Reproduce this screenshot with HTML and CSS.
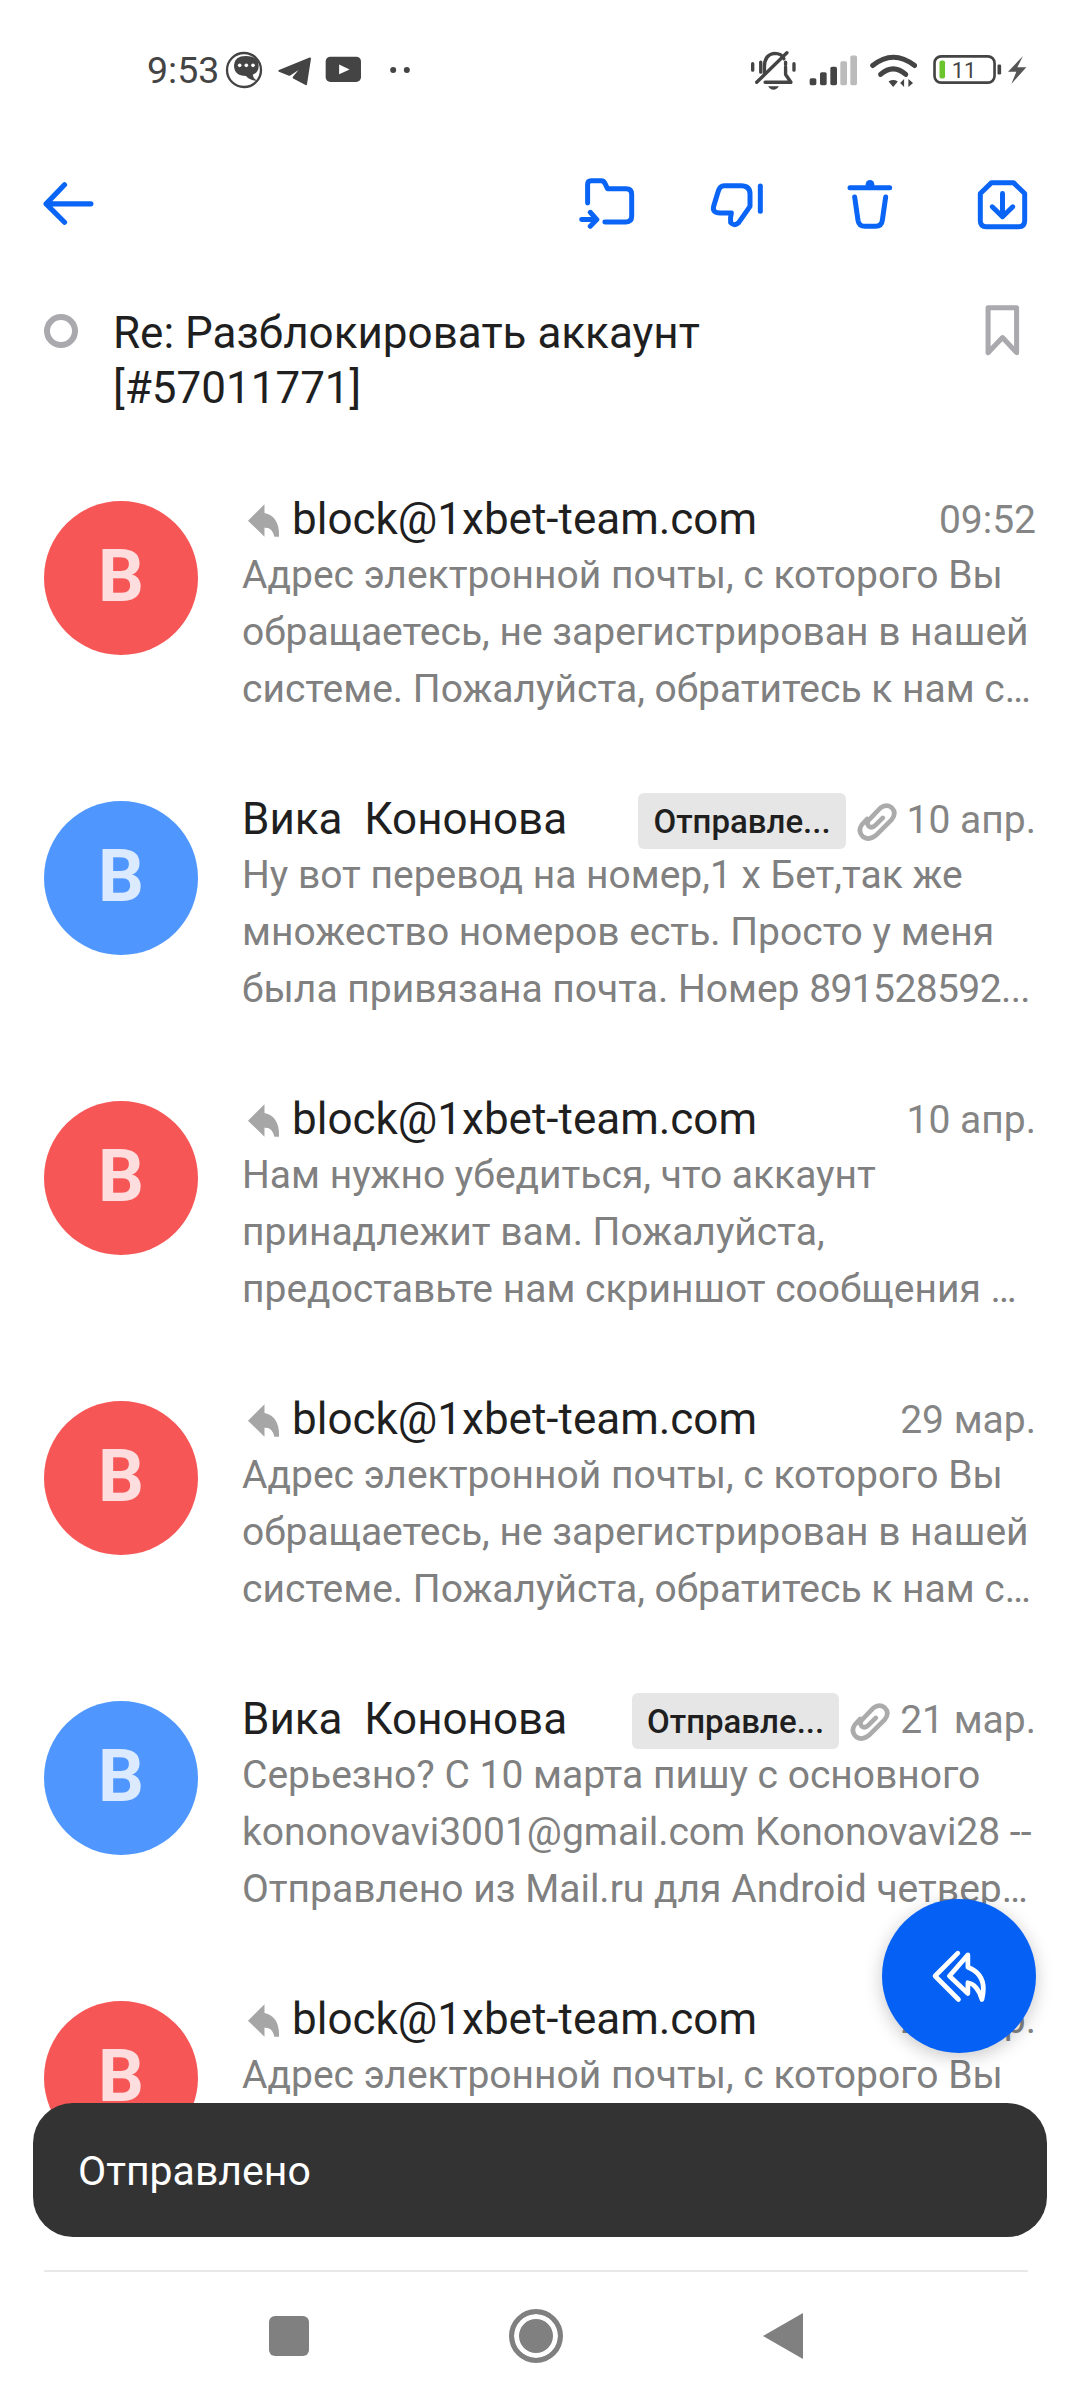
FILE: index.html
```html
<!DOCTYPE html>
<html lang="ru">
<head>
    <meta charset="UTF-8">
    <meta name="viewport" content="width=device-width, initial-scale=1.0">
    <title>Re: Разблокировать аккаунт</title>
    <link rel="stylesheet" href="styles.css">
</head>
<body>
    <div id="screen">
        <!-- status bar -->
        <div class="status">
            <span class="clock">9:53</span>
            <svg class="st-msg" viewBox="375 63 114 114">
                <circle cx="432" cy="120" r="51" fill="none" stroke="#444" stroke-width="7"/>
                <path d="M402 105 Q404 78 437 78 Q476 78 476 108 Q476 127 458 134 Q460 146 472 152 Q450 152 438 138 Q402 138 402 105Z" fill="#444"/>
                <circle cx="419" cy="106" r="5.5" fill="#fff"/>
                <circle cx="439" cy="106" r="5.5" fill="#fff"/>
                <circle cx="459" cy="106" r="5.5" fill="#fff"/>
            </svg>
            <svg class="st-tg" viewBox="530 78 105 92">
                <path d="M537 122 L629 85 L617 162 L580 142 L610 106 L567 134Z" fill="#444" stroke="#444" stroke-width="6" stroke-linejoin="round"/>
            </svg>
            <svg class="st-yt" viewBox="678 80 110 80">
                <rect x="680" y="82" width="105" height="75" rx="14" fill="#444"/>
                <path d="M720 105 L751 120 L720 134Z" fill="#fff"/>
            </svg>
            <svg class="st-dots" viewBox="870 108 65 24">
                <circle cx="882" cy="120" r="9" fill="#444"/>
                <circle cx="923" cy="120" r="9" fill="#444"/>
            </svg>
            <div class="status-right">
                <svg class="st-bell" viewBox="92 62 140 122">
                    <g fill="none" stroke="#444" stroke-width="10" stroke-linecap="round" stroke-linejoin="round">
                        <path d="M135 132 V112 Q135 75 165 72 Q186 72 193 88"/>
                        <path d="M198 112 V135 L214 158 H137"/>
                        <path d="M112 158 L202 70"/>
                        <path d="M100 103 V122 M124 98 V128 M198 98 V105 M223 103 V122"/>
                    </g>
                    <path d="M146 170 H178 Q172 180 162 180 Q152 180 146 170Z" fill="#444"/>
                </svg>
                <svg class="st-signal" viewBox="270 76 144 92">
                    <rect x="272" y="145" width="20" height="21" rx="5" fill="#444"/>
                    <rect x="303" y="127" width="20" height="39" rx="5" fill="#444"/>
                    <rect x="334" y="111" width="20" height="55" rx="5" fill="#444"/>
                    <rect x="364" y="94" width="20" height="72" rx="5" fill="#bbb"/>
                    <rect x="394" y="77" width="20" height="89" rx="5" fill="#bbb"/>
                </svg>
                <svg class="st-wifi" viewBox="450 68 142 104">
                    <g fill="none" stroke="#444" stroke-width="15" stroke-linecap="round">
                        <path d="M458 105 Q520 55 585 105"/>
                        <path d="M482 132 Q520 98 558 132"/>
                    </g>
                    <path d="M506 153 Q520 145 534 153 L520 170Z" fill="#444"/>
                    <path d="M553 146 V170 L541 158Z M566 146 V170 L580 158Z" fill="#444"/>
                </svg>
                <svg class="st-batt" viewBox="634 72 212 94">
                    <rect x="640" y="79" width="182" height="80" rx="20" fill="none" stroke="#444" stroke-width="8"/>
                    <rect x="655" y="92" width="17" height="54" rx="6" fill="#6cc52d"/>
                    <rect x="831" y="104" width="11" height="30" rx="4" fill="#444"/>
                    <text x="692" y="145" font-size="66" fill="#444">11</text>
                </svg>
                <svg class="st-bolt" viewBox="862 75 60 90">
                    <path d="M910 78 L865 125 H890 L875 162 L920 112 H893Z" fill="#555"/>
                </svg>
            </div>
        </div>

        <!-- toolbar -->
        <div class="toolbar">
            <svg class="tb-back" viewBox="68 100 147 122">
                <path d="M130 107 L77 162 L130 215 M77 162 H206"/>
            </svg>
            <div class="tb-right">
                <svg class="tb-folder" viewBox="55 50 172 156">
                    <path d="M84 128 V72 Q84 61 95 61 H125 Q133 61 137 70 L144 85 H200 Q217 85 217 102 V168 Q217 185 200 185 H136"/>
                    <path d="M66 178 H108 M92 156 L112 178 L92 198"/>
                </svg>
                <svg class="tb-thumb" viewBox="452 62 162 138">
                    <path d="M495 73 H545 Q572 73 572 98 V135 L538 184 Q525 196 514 184 Q512 172 516 155 H482 Q458 155 463 135 L476 92 Q481 73 495 73Z"/>
                    <path d="M603 74 V150"/>
                </svg>
                <svg class="tb-trash" viewBox="864 56 138 150">
                    <path d="M873 82 H992"/>
                    <path d="M887 110 L897 180 Q900 198 918 198 H950 Q968 198 970 180 L980 110"/>
                    <circle cx="933" cy="72" r="13" class="tb-fill"/>
                </svg>
                <svg class="tb-save" viewBox="1252 55 154 152">
                    <path d="M1262 98 L1296 65 H1362 L1396 98 V180 Q1396 198 1378 198 H1280 Q1262 198 1262 180Z"/>
                    <path d="M1329 98 V165 M1298 138 L1329 168 L1360 138"/>
                </svg>
            </div>
        </div>

        <!-- subject -->
        <div class="subject">
            <span class="ring"></span>
            <div class="subject-text">Re: Разблокировать аккаунт [#57011771]</div>
            <svg class="bookmark" viewBox="1275 430 110 155">
                <path d="M1287 441 H1372 V575 L1330 530 L1287 575Z"/>
            </svg>
        </div>

        <!-- thread -->
        <div class="thread">
            <div class="mail">
                <div class="avatar red">В</div>
                <div class="mail-body">
                    <div class="mail-head">
                        <svg class="reply" viewBox="676 68 106 106"><path d="M682 122 L732 72 V98 Q778 108 776 170 H762 Q755 140 732 143 V170Z"/></svg>
                        <span class="sender">block@1xbet-team.com</span>
                        <span class="date">09:52</span>
                    </div>
                    <div class="preview">Адрес электронной почты, с которого Вы обращаетесь, не зарегистрирован в нашей системе. Пожалуйста, обратитесь к нам с того адреса, который привязан к вашему аккаунту</div>
                </div>
            </div>
            <div class="mail">
                <div class="avatar blue">В</div>
                <div class="mail-body">
                    <div class="mail-head">
                        <span class="sender">Вика  Кононова</span>
                        <span class="badge">Отправле...</span>
                        <svg class="clip" viewBox="45 40 125 115"><path d="M125 85 L103 107 Q92 118 82 110 Q74 100 84 90 L118 55 Q135 42 152 54 Q168 70 152 90 L105 137 Q85 155 65 142 Q48 125 62 105 L78 88"/></svg>
                        <span class="date">10 апр.</span>
                    </div>
                    <div class="preview">Ну вот перевод на номер,1 х Бет,так же множество номеров есть. Просто у меня была привязана почта. Номер <span class="tight">891528592...</span></div>
                </div>
            </div>
            <div class="mail">
                <div class="avatar red">В</div>
                <div class="mail-body">
                    <div class="mail-head">
                        <svg class="reply" viewBox="676 68 106 106"><path d="M682 122 L732 72 V98 Q778 108 776 170 H762 Q755 140 732 143 V170Z"/></svg>
                        <span class="sender">block@1xbet-team.com</span>
                        <span class="date">10 апр.</span>
                    </div>
                    <div class="preview">Нам нужно убедиться, что аккаунт принадлежит вам. Пожалуйста, предоставьте нам скриншот сообщения от службы поддержки и номер вашего счета</div>
                </div>
            </div>
            <div class="mail">
                <div class="avatar red">В</div>
                <div class="mail-body">
                    <div class="mail-head">
                        <svg class="reply" viewBox="676 68 106 106"><path d="M682 122 L732 72 V98 Q778 108 776 170 H762 Q755 140 732 143 V170Z"/></svg>
                        <span class="sender">block@1xbet-team.com</span>
                        <span class="date">29 мар.</span>
                    </div>
                    <div class="preview">Адрес электронной почты, с которого Вы обращаетесь, не зарегистрирован в нашей системе. Пожалуйста, обратитесь к нам с того адреса, который привязан к вашему аккаунту</div>
                </div>
            </div>
            <div class="mail">
                <div class="avatar blue">В</div>
                <div class="mail-body">
                    <div class="mail-head">
                        <span class="sender">Вика  Кононова</span>
                        <span class="badge">Отправле...</span>
                        <svg class="clip" viewBox="45 40 125 115"><path d="M125 85 L103 107 Q92 118 82 110 Q74 100 84 90 L118 55 Q135 42 152 54 Q168 70 152 90 L105 137 Q85 155 65 142 Q48 125 62 105 L78 88"/></svg>
                        <span class="date">21 мар.</span>
                    </div>
                    <div class="preview">Серьезно? С 10 марта пишу с основного kononovavi3001@gmail.com Kononovavi28 -- Отправлено из Mail.ru для Android четверг, 10 марта 2022 г. в 12:00</div>
                </div>
            </div>
            <div class="mail">
                <div class="avatar red">В</div>
                <div class="mail-body">
                    <div class="mail-head">
                        <svg class="reply" viewBox="676 68 106 106"><path d="M682 122 L732 72 V98 Q778 108 776 170 H762 Q755 140 732 143 V170Z"/></svg>
                        <span class="sender">block@1xbet-team.com</span>
                        <span class="date">21 мар.</span>
                    </div>
                    <div class="preview">Адрес электронной почты, с которого Вы обращаетесь, не зарегистрирован в нашей системе. Пожалуйста, обратитесь к нам с того адреса, который привязан к вашему аккаунту</div>
                </div>
            </div>
        </div>

        <!-- bottom nav -->
        <div class="navbar">
            <div class="nav-cell"><span class="nav-square"></span></div>
            <div class="nav-cell"><span class="nav-circle"></span></div>
            <div class="nav-cell"><span class="nav-tri"></span></div>
        </div>

        <!-- floating stuff -->
        <div class="fab">
            <svg viewBox="330 268 170 160">
                <path d="M410 280 L342 348 L412 418"/>
                <path d="M440 285 L385 348 L440 400 V368 Q468 372 482 418 Q500 345 440 322Z"/>
            </svg>
        </div>
        <div class="snackbar">Отправлено</div>
    </div>
</body>
</html>
```

FILE: styles.css
```css
* {
    box-sizing: border-box;
}

body {
    margin: 0;
    background: #fff;
    font-family: Roboto, "Noto Sans", sans-serif;
}

#screen {
    position: relative;
    width: 1080px;
    height: 2400px;
    overflow: hidden;
    display: flex;
    flex-direction: column;
}

/* status bar */
.status {
    height: 100px;
    padding: 40px 53px 0 147px;
    display: flex;
    align-items: flex-start;
    flex: none;
}

.status svg {
    display: block;
    flex: none;
}

.status text {
    font-family: Roboto, sans-serif;
}

.clock {
    font-size: 37.5px;
    line-height: 60px;
    color: #444;
}

.st-msg { width: 38px; height: 38px; margin: 11px 0 0 6px; }
.st-tg { width: 35px; height: 31px; margin: 16px 0 0 14px; }
.st-yt { width: 37px; height: 27px; margin: 16px 0 0 13px; }
.st-dots { width: 22px; height: 8px; margin: 26px 0 0 27px; }

.status-right {
    margin-left: auto;
    display: flex;
    align-items: flex-start;
}

.st-bell { width: 47px; height: 41px; margin: 10px 0 0 0; }
.st-signal { width: 48px; height: 31px; margin: 15px 0 0 12px; }
.st-wifi { width: 47px; height: 35px; margin: 13px 0 0 13px; }
.st-batt { width: 71px; height: 31px; margin: 14px 0 0 15px; }
.st-bolt { width: 20px; height: 30px; margin: 15px 0 0 4px; }

/* toolbar */
.toolbar {
    height: 206px;
    padding: 72px 52px 0 43px;
    display: flex;
    justify-content: space-between;
    align-items: flex-start;
    flex: none;
}

.toolbar svg {
    display: block;
    fill: none;
    stroke: #0a64f5;
    stroke-width: 15;
    stroke-linecap: round;
    stroke-linejoin: round;
}

.toolbar .tb-fill {
    fill: #0a64f5;
    stroke: none;
}

.tb-right {
    display: flex;
    align-items: flex-start;
}

.tb-back { width: 51px; height: 43px; margin-top: 10px; }
.tb-folder { width: 57px; height: 52px; margin-top: 5px; }
.tb-thumb { width: 54px; height: 46px; margin: 10px 0 0 75px; }
.tb-trash { width: 46px; height: 50px; margin: 7px 0 0 83px; }
.tb-save { width: 51px; height: 51px; margin: 7px 0 0 84px; }

/* subject */
.subject {
    height: 195px;
    padding: 0 59px 0 44px;
    display: flex;
    align-items: flex-start;
    flex: none;
}

.ring {
    width: 34px;
    height: 34px;
    margin-top: 8px;
    border: 6px solid #a9a9ae;
    border-radius: 50%;
    flex: none;
}

.subject-text {
    width: 660px;
    margin-left: 35px;
    font-size: 44px;
    line-height: 55px;
    color: #1f1f1f;
}

.bookmark {
    width: 37px;
    height: 52px;
    margin: -2px 0 0 auto;
    flex: none;
    fill: none;
    stroke: #a9a9ae;
    stroke-width: 15;
    stroke-linejoin: round;
}

/* thread */
.thread {
    flex: 1;
    overflow: hidden;
}

.mail {
    height: 300px;
    padding: 0 44px;
    display: flex;
    gap: 44px;
}

.avatar {
    width: 154px;
    height: 154px;
    padding-bottom: 3px;
    border-radius: 50%;
    flex: none;
    display: flex;
    align-items: center;
    justify-content: center;
    font-size: 72px;
    font-weight: 700;
    color: rgba(255, 255, 255, 0.8);
}

.avatar.red { background: #f65656; }
.avatar.blue { background: #4f97ff; }

.mail-body {
    flex: 1;
    min-width: 0;
}

.mail-head {
    height: 45.5px;
    display: flex;
    align-items: flex-start;
}

.reply {
    width: 35px;
    height: 35px;
    margin: 2px 11px 0 4px;
    flex: none;
    fill: #a6a6a6;
}

.sender {
    font-size: 44px;
    line-height: 36px;
    color: #1f1f1f;
    white-space: pre;
}

.date {
    margin-left: auto;
    font-size: 39px;
    line-height: 38px;
    color: #858585;
    white-space: nowrap;
    flex: none;
}

.badge {
    margin: -8px 0 0 auto;
    height: 56px;
    padding: 0 15px;
    display: flex;
    align-items: center;
    background: #e6e6e6;
    border-radius: 6px;
    font-size: 33px;
    font-weight: 500;
    color: #1f1f1f;
    flex: none;
}

.badge + .clip {
    width: 42px;
    height: 38px;
    margin: 2px 9px 0 10px;
    flex: none;
    fill: none;
    stroke: #ababab;
    stroke-width: 14;
    stroke-linecap: round;
    stroke-linejoin: round;
}

.badge ~ .date {
    margin-left: 0;
}

.preview {
    font-size: 39px;
    line-height: 57.4px;
    color: #808080;
    display: -webkit-box;
    -webkit-box-orient: vertical;
    -webkit-line-clamp: 3;
    overflow: hidden;
}

.tight {
    letter-spacing: -0.6px;
}

/* bottom nav */
.navbar {
    height: 130px;
    margin: 0 52px 0 44px;
    border-top: 2px solid #e8e8e8;
    display: flex;
    justify-content: center;
    flex: none;
}

.nav-cell {
    width: 247px;
    height: 128px;
    display: flex;
    align-items: center;
    justify-content: center;
}

.nav-square {
    width: 40px;
    height: 40px;
    border-radius: 6px;
    background: #808080;
}

.nav-circle {
    width: 54px;
    height: 54px;
    border: 5px solid #808080;
    border-radius: 50%;
    background: #808080;
    box-shadow: inset 0 0 0 5px #fff;
}

.nav-tri {
    width: 40px;
    height: 46px;
    background: #808080;
    clip-path: polygon(100% 0, 100% 100%, 0 50%);
}

/* things lying over the list */
.fab {
    position: absolute;
    left: 882px;
    top: 1899px;
    width: 154px;
    height: 154px;
    border-radius: 50%;
    background: #0561f5;
    box-shadow: 0 4px 18px rgba(0, 0, 0, 0.22);
    display: flex;
    align-items: center;
    justify-content: center;
}

.fab svg {
    width: 57px;
    height: 54px;
    fill: none;
    stroke: #fff;
    stroke-width: 14;
    stroke-linecap: round;
    stroke-linejoin: round;
}

.snackbar {
    position: absolute;
    left: 33px;
    top: 2103px;
    width: 1014px;
    height: 134px;
    padding: 2px 0 0 45px;
    display: flex;
    align-items: center;
    background: #333;
    border-radius: 40px;
    font-size: 41px;
    color: #fff;
}
```
